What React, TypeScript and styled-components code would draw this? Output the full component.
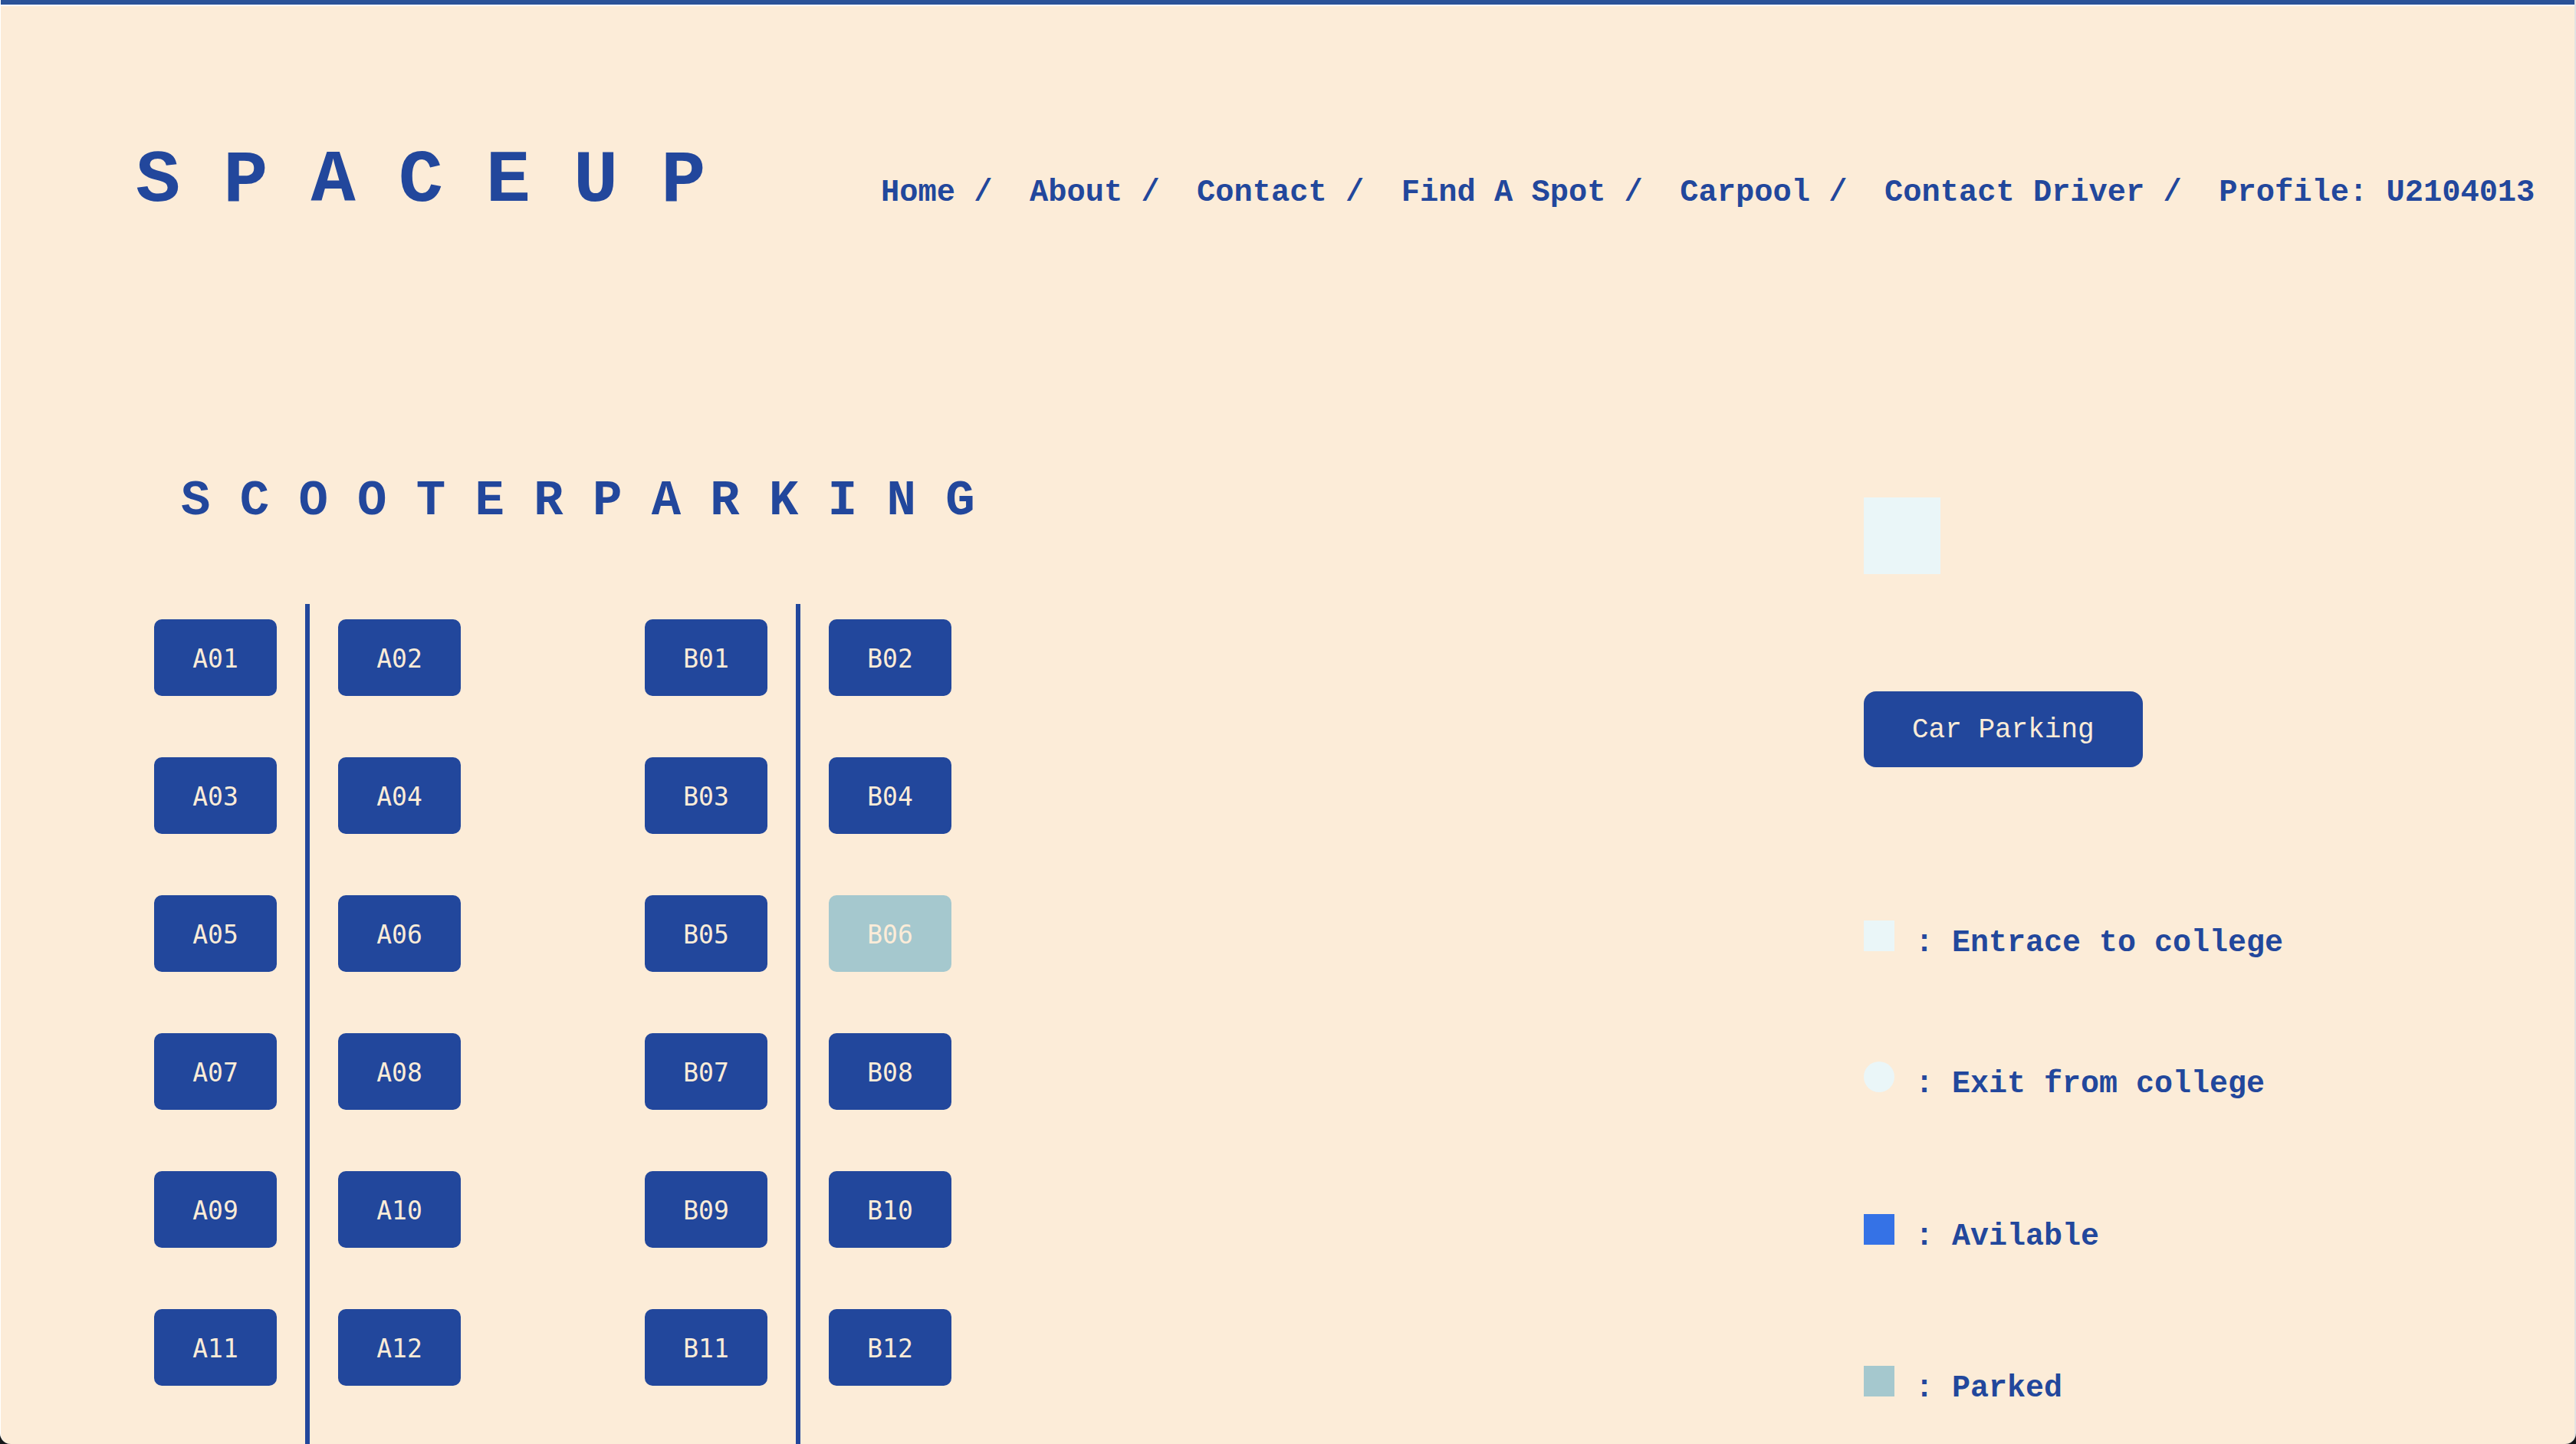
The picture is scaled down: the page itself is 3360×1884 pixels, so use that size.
import React from "react";
import styled, { createGlobalStyle } from "styled-components";

const C = {
  cream: "#fcecd8",
  blue: "#22479c",
  bar: "#2a5298",
  parked: "#a5c8ce",
  light: "#eaf6f8",
  avail: "#3572e6",
};

const MONO = `"Liberation Mono", "DejaVu Sans Mono", monospace`;
const DOTMONO = `"DejaVu Sans Mono", "Liberation Mono", monospace`;

const Global = createGlobalStyle`
  html, body { margin: 0; padding: 0; background: #15171a; }
  body { font-family: ${MONO}; }
  #root { width: 3360px; height: 1884px; overflow: hidden; }
  * { box-sizing: border-box; }
`;

const Window = styled.div`
  width: 3360px;
  height: 1884px;
  background: ${C.cream};
  border-left: 1px solid #ffffff;
  border-right: 2px solid #e2e2e2;
  border-radius: 0 0 14px 14px;
  overflow: hidden;
  display: flex;
  flex-direction: column;
`;

const TopBar = styled.div`
  flex: none;
  height: 8px;
  background: ${C.bar};
  border-bottom: 2px solid #ffffff;
`;

const Header = styled.header`
  display: flex;
  align-items: baseline;
  padding: 180px 0 0 176px;
`;

const Logo = styled.h1`
  margin: 0;
  width: 972px;
  flex: none;
  font-family: ${MONO};
  font-size: 97px;
  font-weight: 700;
  letter-spacing: 56px;
  line-height: 1;
  color: ${C.blue};
`;

const Nav = styled.nav`
  display: flex;
  align-items: baseline;
  font-size: 40.4px;
  font-weight: 700;
  line-height: 1;
  color: ${C.blue};
  white-space: pre;
`;

const NavLink = styled.a`
  color: inherit;
  text-decoration: none;
`;

const Sep = styled.span``;

const Main = styled.main`
  display: flex;
  align-items: flex-start;
  padding-top: 337px;
`;

const LeftPanel = styled.section`
  flex: 0 0 2430px;
  padding-left: 200px;
`;

const Title = styled.h2`
  margin: 0 0 0 35px;
  font-family: ${MONO};
  font-size: 64px;
  font-weight: 700;
  letter-spacing: 38.3px;
  line-height: 1;
  color: ${C.blue};
`;

const Lots = styled.div`
  display: flex;
  gap: 240px;
  margin-top: 102px;
`;

const LotBlock = styled.div`
  display: flex;
`;

const LotColumn = styled.div`
  display: flex;
  flex-direction: column;
  gap: 80px;
  padding: 20px 0 80px;
`;

const Divider = styled.div`
  width: 6px;
  margin: 0 37px;
  background: ${C.blue};
`;

const Slot = styled.button<{ $parked?: boolean }>`
  width: 160px;
  height: 100px;
  border: none;
  border-radius: 10px;
  padding: 3px 0 0;
  display: flex;
  align-items: center;
  justify-content: center;
  font-family: ${DOTMONO};
  font-size: 33px;
  color: ${C.cream};
  background: ${(p) => (p.$parked ? C.parked : C.blue)};
`;

const RightPanel = styled.aside`
  display: flex;
  flex-direction: column;
  align-items: flex-start;
  padding-top: 27px;
`;

const EntranceMark = styled.div`
  width: 100px;
  height: 100px;
  background: ${C.light};
`;

const CarButton = styled.button`
  margin-top: 153px;
  height: 99px;
  padding: 2px 63px 0;
  border: none;
  border-radius: 16px;
  background: ${C.blue};
  color: ${C.cream};
  font-family: ${MONO};
  font-size: 36px;
`;

const LegendRow = styled.div<{ $mt: number }>`
  display: flex;
  align-items: baseline;
  margin-top: ${(p) => p.$mt}px;
`;

const Swatch = styled.span<{ $color: string; $round?: boolean }>`
  display: block;
  width: 40px;
  height: 40px;
  background: ${(p) => p.$color};
  border-radius: ${(p) => (p.$round ? "50%" : "0")};
`;

const LegendText = styled.span`
  margin-left: 27px;
  font-size: 40px;
  font-weight: 700;
  line-height: 1;
  color: ${C.blue};
  white-space: pre;
`;

const navItems = [
  "Home",
  "About",
  "Contact",
  "Find A Spot",
  "Carpool",
  "Contact Driver",
  "Profile: U2104013",
];

const pad = (n: number) => (n < 10 ? `0${n}` : `${n}`);

const parked = new Set(["B06"]);

function Block({ letter }: { letter: string }) {
  const left = [1, 3, 5, 7, 9, 11].map((n) => `${letter}${pad(n)}`);
  const right = [2, 4, 6, 8, 10, 12].map((n) => `${letter}${pad(n)}`);
  return (
    <LotBlock>
      <LotColumn>
        {left.map((id) => (
          <Slot key={id} $parked={parked.has(id)}>
            {id}
          </Slot>
        ))}
      </LotColumn>
      <Divider />
      <LotColumn>
        {right.map((id) => (
          <Slot key={id} $parked={parked.has(id)}>
            {id}
          </Slot>
        ))}
      </LotColumn>
    </LotBlock>
  );
}

const legend = [
  { color: C.light, round: false, text: ": Entrace to college", mt: 200 },
  { color: C.light, round: true, text: ": Exit from college", mt: 134 },
  { color: C.avail, round: false, text: ": Avilable", mt: 149 },
  { color: C.parked, round: false, text: ": Parked", mt: 148 },
];

export default function App() {
  return (
    <>
      <Global />
      <Window>
        <TopBar />
        <Header>
          <Logo>SPACEUP</Logo>
          <Nav>
            {navItems.map((item, i) => (
              <React.Fragment key={item}>
                {i > 0 && <Sep>{" /  "}</Sep>}
                <NavLink href="#">{item}</NavLink>
              </React.Fragment>
            ))}
          </Nav>
        </Header>
        <Main>
          <LeftPanel>
            <Title>SCOOTERPARKING</Title>
            <Lots>
              <Block letter="A" />
              <Block letter="B" />
            </Lots>
          </LeftPanel>
          <RightPanel>
            <EntranceMark />
            <CarButton>Car Parking</CarButton>
            {legend.map((l) => (
              <LegendRow key={l.text} $mt={l.mt}>
                <Swatch $color={l.color} $round={l.round} />
                <LegendText>{l.text}</LegendText>
              </LegendRow>
            ))}
          </RightPanel>
        </Main>
      </Window>
    </>
  );
}
